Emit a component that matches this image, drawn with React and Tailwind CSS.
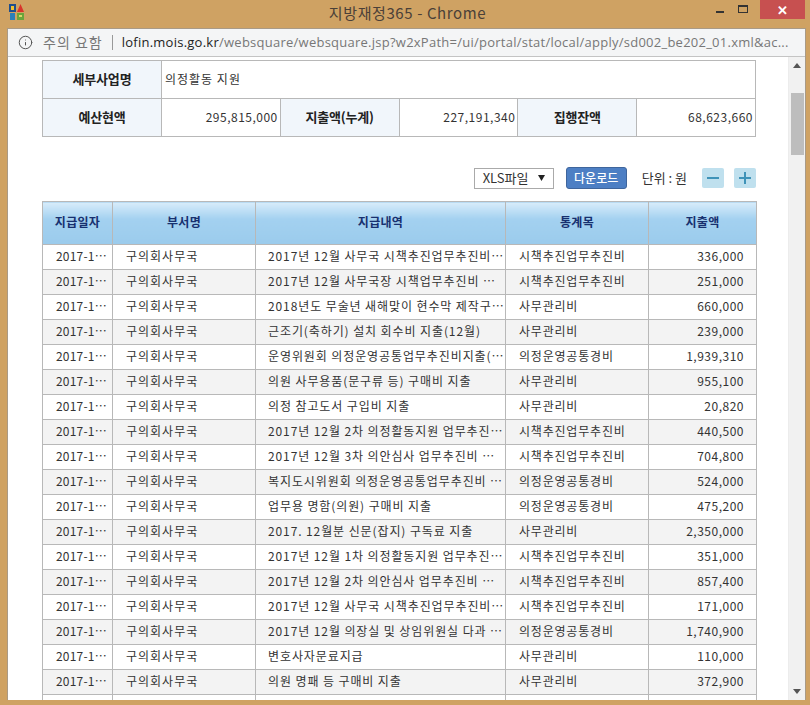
import { Info } from 'lucide-react'

const font = { fontFamily: '"Noto Sans CJK KR", "Liberation Sans", sans-serif' }

const rows = [
  ['2017년 12월 사무국 시책추진업무추진비…', '시책추진업무추진비', '336,000'],
  ['2017년 12월 사무국장 시책업무추진비 …', '시책추진업무추진비', '251,000'],
  ['2018년도 무술년 새해맞이 현수막 제작구…', '사무관리비', '660,000'],
  ['근조기(축하기) 설치 회수비 지출(12월)', '사무관리비', '239,000'],
  ['운영위원회 의정운영공통업무추진비지출(…', '의정운영공통경비', '1,939,310'],
  ['의원 사무용품(문구류 등) 구매비 지출', '사무관리비', '955,100'],
  ['의정 참고도서 구입비 지출', '사무관리비', '20,820'],
  ['2017년 12월 2차 의정활동지원 업무추진…', '시책추진업무추진비', '440,500'],
  ['2017년 12월 3차 의안심사 업무추진비 …', '시책추진업무추진비', '704,800'],
  ['복지도시위원회 의정운영공통업무추진비 …', '의정운영공통경비', '524,000'],
  ['업무용 명함(의원) 구매비 지출', '의정운영공통경비', '475,200'],
  ['2017. 12월분 신문(잡지) 구독료 지출', '사무관리비', '2,350,000'],
  ['2017년 12월 1차 의정활동지원 업무추진…', '시책추진업무추진비', '351,000'],
  ['2017년 12월 2차 의안심사 업무추진비 …', '시책추진업무추진비', '857,400'],
  ['2017년 12월 사무국 시책추진업무추진비…', '시책추진업무추진비', '171,000'],
  ['2017년 12월 의장실 및 상임위원실 다과 …', '의정운영공통경비', '1,740,900'],
  ['변호사자문료지급', '사무관리비', '110,000'],
  ['의원 명패 등 구매비 지출', '사무관리비', '372,900'],
  ['', '', ''],
]

function Logo() {
  return (
    <svg width="16" height="16" viewBox="0 0 16 16" className="ml-[9px] mt-[4px]">
      <rect x="0" y="0" width="7" height="8" fill="#1f4e8c" />
      <rect x="2" y="2" width="3" height="4" fill="#f2c230" />
      <path d="M8 8 11.5 0 15 8Z" fill="#d9342b" />
      <rect x="1" y="9" width="5" height="7" fill="#2a7fb8" />
      <rect x="8" y="9" width="7" height="7" fill="#6aa53a" />
      <rect x="10" y="11" width="3" height="2" fill="#d8d86a" />
    </svg>
  )
}

function TopHead({ children, className = '' }) {
  return (
    <td className={`border border-[#b8b8b8] bg-[#f1f6fb] pb-[2px] text-center text-[13px] font-bold tracking-[-0.2px] text-[#222] ${className}`}>
      {children}
    </td>
  )
}

function Amount({ children }) {
  return <td className="border border-[#b8b8b8] bg-white pb-[1px] pr-[2px] text-right tracking-[0.5px] text-[#333]">{children}</td>
}

function HeadCell({ children }) {
  return (
    <th className="border border-[#b8b8b8] bg-gradient-to-b from-[#d8ecfa] via-[#a3d1f0] via-40% to-[#9bcbec] pb-[2px] text-center text-[12px] font-bold tracking-[0.3px] text-[#17306f]">
      {children}
    </th>
  )
}

export default function App() {
  return (
    <div className="flex h-[705px] w-[810px] flex-col overflow-hidden bg-[#cfa263] text-[12px]" style={font}>
      {/* Title bar */}
      <div className="flex h-[28px] shrink-0 items-start justify-between">
        <Logo />
        <div className="ml-[74px] mt-[3px] text-[15px] leading-[20px] tracking-[0.6px] text-[#4a4038]">지방재정365 - Chrome</div>
        <div className="flex items-start">
          <div className="mt-[11px] h-[2px] w-[8px] bg-[#333]" />
          <div className="ml-[14px] mt-[5px] h-[8px] w-[10px] border border-t-2 border-[#333]" />
          <div className="ml-[12px] mr-[5px] flex h-[19px] w-[45px] items-center justify-center bg-[#c75050] text-[13px] font-bold leading-none text-white">✕</div>
        </div>
      </div>

      {/* Address bar + page */}
      <div className="ml-[7px] mr-[4px] mb-[5px] flex min-h-0 flex-1 flex-col border border-b-0 border-[#a99a86] bg-white">
        <div className="flex h-[28px] shrink-0 items-center border-b border-[#c4c4c4] bg-[#f4f5f6] text-[14px]">
          <Info size={15} strokeWidth={1.6} className="ml-[10px] text-[#555]" />
          <span className="ml-[10px] tracking-[1px] text-[#777]">주의 요함</span>
          <span className="ml-[9px] h-[15px] w-px bg-[#999]" />
          <span className="ml-[9px] whitespace-nowrap text-[13px] tracking-[0.25px] text-[#222]" style={{ fontFamily: '"Open Sans", sans-serif' }}>
            lofin.mois.go.kr<span className="text-[#777]">/websquare/websquare.jsp?w2xPath=/ui/portal/stat/local/apply/sd002_be202_01.xml&ac...</span>
          </span>
        </div>

        <div className="flex min-h-0 flex-1">
          <div className="min-w-0 flex-1 overflow-hidden pl-[34px] pt-[3px]">
            {/* Summary table */}
            <table className="w-[714px] table-fixed border-collapse">
              <tbody>
                <tr className="h-[38px]">
                  <TopHead className="w-[119px]">세부사업명</TopHead>
                  <td colSpan={5} className="border border-[#b8b8b8] pb-[2px] pl-[3px] tracking-[1px] text-[#333]">의정활동 지원</td>
                </tr>
                <tr className="h-[38px]">
                  <TopHead>예산현액</TopHead>
                  <Amount>295,815,000</Amount>
                  <TopHead>지출액(누계)</TopHead>
                  <Amount>227,191,340</Amount>
                  <TopHead>집행잔액</TopHead>
                  <Amount>68,623,660</Amount>
                </tr>
              </tbody>
            </table>

            {/* Toolbar */}
            <div className="mt-[30px] flex h-[22px] w-[714px] items-center justify-end">
              <div className="flex h-[21px] w-[80px] items-center justify-between border border-[#aaa] pl-[8px] pr-[8px] text-[13px] text-[#333]">
                XLS파일
                <svg width="7" height="6" viewBox="0 0 7 6"><path d="M0 0H7L3.5 6Z" fill="#222" /></svg>
              </div>
              <button className="ml-[12px] h-[22px] w-[61px] rounded-[3px] border border-[#3f659c] bg-[#4d7fc4] text-[12px] font-medium text-white">다운로드</button>
              <span className="ml-[15px] text-[13px] text-[#333]">단위 : 원</span>
              <div className="ml-[15px] flex h-[20px] w-[22px] items-center justify-center rounded-[2px] bg-[#bfe0ee]">
                <span className="h-[2px] w-[12px] bg-[#3f93b8]" />
              </div>
              <div className="relative ml-[10px] flex h-[20px] w-[22px] items-center justify-center rounded-[2px] bg-[#bfe0ee]">
                <span className="h-[2px] w-[12px] bg-[#3f93b8]" />
                <span className="absolute h-[12px] w-[2px] bg-[#3f93b8]" />
              </div>
            </div>

            {/* Detail table */}
            <table className="mt-[12px] w-[714px] table-fixed border-collapse">
              <colgroup>
                <col className="w-[70px]" />
                <col className="w-[143px]" />
                <col className="w-[250px]" />
                <col className="w-[143px]" />
                <col className="w-[108px]" />
              </colgroup>
              <thead>
                <tr className="h-[43px]">
                  <HeadCell>지급일자</HeadCell>
                  <HeadCell>부서명</HeadCell>
                  <HeadCell>지급내역</HeadCell>
                  <HeadCell>통계목</HeadCell>
                  <HeadCell>지출액</HeadCell>
                </tr>
              </thead>
              <tbody>
                {rows.map((r, i) => (
                  <tr key={i} className={`h-[25px] ${i % 2 ? 'bg-[#f3f3f3]' : 'bg-white'}`}>
                    <td className="overflow-hidden whitespace-nowrap border border-[#b8b8b8] pb-[3px] pl-[13px] tracking-[0.2px] text-[#333]">{r[2] ? '2017-1…' : ''}</td>
                    <td className="whitespace-nowrap border border-[#b8b8b8] pb-[3px] pl-[13px] tracking-[1px] text-[#333]">{r[2] ? '구의회사무국' : ''}</td>
                    <td className="overflow-hidden whitespace-nowrap border border-[#b8b8b8] pb-[3px] pl-[12px] tracking-[0.9px] text-[#333]">{r[0]}</td>
                    <td className="whitespace-nowrap border border-[#b8b8b8] pb-[3px] pl-[13px] tracking-[0.8px] text-[#333]">{r[1]}</td>
                    <td className="border border-[#b8b8b8] pb-[3px] pr-[12px] text-right tracking-[0.5px] text-[#333]">{r[2]}</td>
                  </tr>
                ))}
              </tbody>
            </table>
          </div>

          {/* Scrollbar */}
          <div className="flex w-[17px] shrink-0 flex-col items-center border-l border-[#ececec] bg-[#f1f1f1]">
            <svg width="8" height="5" viewBox="0 0 8 5" className="mt-[6px]"><path d="M4 0 8 5H0Z" fill="#555" /></svg>
            <div className="mt-[25px] h-[62px] w-[13px] bg-[#bdbdbd]" />
            <div className="flex-1" />
            <svg width="8" height="5" viewBox="0 0 8 5" className="mb-[6px]"><path d="M0 0H8L4 5Z" fill="#555" /></svg>
          </div>
        </div>
      </div>
    </div>
  )
}
